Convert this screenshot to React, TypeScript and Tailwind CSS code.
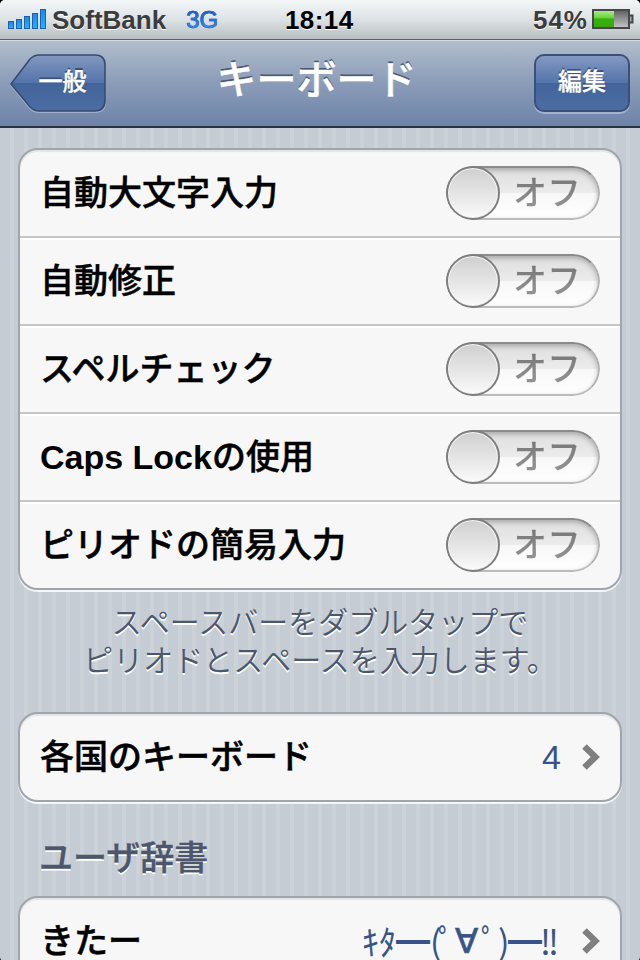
import React from "react";

const SignalBars = () => (
  <svg width="40" height="24" viewBox="0 0 40 24" className="shrink-0">
    <defs>
      <linearGradient id="signal" x1="0" y1="0" x2="0" y2="1">
        <stop offset="0" stopColor="#1f86e6" />
        <stop offset="1" stopColor="#1fb4fb" />
      </linearGradient>
    </defs>
    {[8, 10, 13, 16, 20].map((h, i) => (
      <rect key={h} x={0.5 + i * 8} y={21.5 - h} width="5" height={h - 1} fill="url(#signal)" stroke="#1c5fb4" />
    ))}
  </svg>
);

const Battery = () => (
  <svg width="42" height="22" viewBox="0 0 42 22" className="shrink-0">
    <defs>
      <linearGradient id="charge" x1="0" y1="0" x2="0" y2="1">
        <stop offset="0" stopColor="#a9ea8c" />
        <stop offset="0.4" stopColor="#6fd53e" />
        <stop offset="0.5" stopColor="#35b30b" />
        <stop offset="1" stopColor="#3aa80f" />
      </linearGradient>
      <linearGradient id="cell" x1="0" y1="0" x2="0" y2="1">
        <stop offset="0" stopColor="#5c5d5f" />
        <stop offset="1" stopColor="#c6c8ca" />
      </linearGradient>
    </defs>
    <rect x="1" y="1" width="36" height="18" fill="url(#cell)" stroke="#46474a" strokeWidth="2" />
    <rect x="2" y="2" width="20" height="16" fill="url(#charge)" />
    <path d="M38 6.5h2.5v7H38" fill="#a8abad" stroke="#46474a" strokeWidth="2" />
  </svg>
);

const StatusBar = () => (
  <div className="grid h-10 w-full shrink-0 grid-cols-[285px_1fr_auto] items-center border-b border-[#5b6064] bg-linear-to-b from-[#f3f7f8] via-[#dde2e4] to-[#b9bfc1] pl-2 pr-1.5 text-[26px] leading-none font-bold">
    <div className="flex items-center">
      <SignalBars />
      <span className="ml-1 text-[#3b3c3d] [text-shadow:0_1px_0_#ffffff]">SoftBank</span>
      <span className="ml-5 bg-linear-to-b from-[#1b3fae] to-[#3f9cf0] bg-clip-text pt-px text-[24px] font-normal text-transparent [-webkit-text-stroke:0.7px_#2a6fd4]">
        3G
      </span>
    </div>
    <span className="-ml-2 tracking-[0.4px] text-black [text-shadow:0_1px_0_#ffffff]">18:14</span>
    <div className="flex items-center gap-1">
      <span className="-ml-px tracking-[1px] text-[#3b3c3d] [text-shadow:0_1px_0_#ffffff]">54%</span>
      <Battery />
    </div>
  </div>
);

const BackButton = ({ label }: { label: string }) => (
  <button className="relative h-[60px] w-[97px] text-[24px] leading-none font-medium text-white [-webkit-text-stroke:0.3px]">
    <svg width="97" height="60" viewBox="0 0 97 60" className="absolute inset-0">
      <defs>
        <linearGradient id="back" x1="0" y1="0" x2="0" y2="1">
          <stop offset="0" stopColor="#8399c0" />
          <stop offset="0.5" stopColor="#5373aa" />
          <stop offset="0.5" stopColor="#446499" />
          <stop offset="1" stopColor="#4a6da4" />
        </linearGradient>
      </defs>
      <path
        d="M1 31L20 6Q24 2 29 2H85Q95 2 95 12V48Q95 58 85 58H29Q24 58 20 54Z"
        fill="none"
        stroke="#b4c1d5"
        strokeOpacity="0.7"
        strokeWidth="2"
      />
      <path d="M1 30L20 5Q24 1 29 1H85Q95 1 95 11V46Q95 57 85 57H29Q24 57 20 53Z" fill="url(#back)" stroke="#354a70" strokeWidth="1.6" />
    </svg>
    <span className="relative top-[-2px] left-[4px] [text-shadow:0_-2px_0_#3c5078]">{label}</span>
  </button>
);

const NavBar = () => (
  <header className="flex h-[88px] w-full shrink-0 items-start justify-between border-t border-b-2 border-t-[#d3dae3] border-b-[#2b3446] bg-linear-to-b from-[#b1bdcc] via-[#8b9cb8] to-[#6d83a8] px-[10px] pt-[13px]">
    <BackButton label="一般" />
    <h1 className="mt-[6px] -ml-2 text-[40px] leading-[40px] font-medium text-white [-webkit-text-stroke:0.5px] [text-shadow:0_-2px_0_#4d5a70]">
      キーボード
    </h1>
    <button className="h-[58px] w-24 rounded-[10px] border-2 border-[#3a5079] bg-[linear-gradient(#8399c0,#5373aa_50%,#446499_50%,#4a6da4)] pb-[2px] text-[24px] leading-none font-medium text-white shadow-[0_2px_0_#a3b2ca] [-webkit-text-stroke:0.3px] [text-shadow:0_-2px_0_#3c5078]">
      編集
    </button>
  </header>
);

const Toggle = () => (
  <div className="relative h-[54px] w-[154px] shrink-0 overflow-hidden rounded-full bg-[linear-gradient(#dcdcdc,#ececec_50%,#f8f8f8_50%,#ffffff)]">
    <span className="absolute top-[9px] left-[67px] bg-linear-to-b from-[#757575] to-[#979797] bg-clip-text text-[34px] leading-[36px] font-medium text-transparent">
      オフ
    </span>
    <div className="absolute inset-0 rounded-full border-2 border-t-[#8a8a8a] border-r-[#b0b0b0] border-b-[#bcbcbc] border-l-[#7d7d7d] shadow-[inset_0_2px_5px_rgba(0,0,0,0.25)]" />
    <div className="absolute top-0 left-0 h-[54px] w-[54px] rounded-full border-2 border-[#7e7e7e] bg-linear-to-b from-[#cfcfcf] to-[#fafafa] shadow-[inset_0_0_0_1px_#f6f6f6]" />
  </div>
);

const Chevron = () => (
  <svg width="18" height="28" viewBox="0 0 18 28" className="shrink-0">
    <path d="M2.5 3.5L13.3 14L2.5 24.5" fill="none" stroke="#7f7f7f" strokeWidth="6.5" />
  </svg>
);

const Card = ({ children }: { children: React.ReactNode }) => (
  <section className="mx-[18px] rounded-[20px] border-2 border-[#9fa5ad] bg-[#f7f7f7] shadow-[0_2px_0_#f4f6f8,inset_0_2px_1px_#e3e4e6]">
    {children}
  </section>
);

const Row = ({ label, children }: { label: React.ReactNode; children: React.ReactNode }) => (
  <div className="flex h-[88px] items-center justify-between border-b-2 border-[#c4c5c7] pr-5 pl-5 shadow-[0_2px_0_#ffffff] last:h-[86px] last:border-b-0 last:shadow-none">
    <span className="pb-px text-[34px] leading-[40px] font-medium text-black [-webkit-text-stroke:0.5px]">{label}</span>
    {children}
  </div>
);

const toggles = [
  { id: "caps", label: "自動大文字入力" },
  { id: "correct", label: "自動修正" },
  { id: "spell", label: "スペルチェック" },
  {
    id: "capslock",
    label: (
      <>
        <b className="font-bold [-webkit-text-stroke:0]">Caps Lock</b>の使用
      </>
    ),
  },
  { id: "period", label: "ピリオドの簡易入力" },
];

export default function App() {
  return (
    <div className="h-[960px] w-[640px] overflow-hidden bg-black font-['Liberation_Sans','Noto_Sans_CJK_JP',sans-serif]">
      <div className="flex h-[962px] w-full flex-col overflow-hidden rounded-[5px] bg-[repeating-linear-gradient(90deg,#c5ccd4_0px,#c5ccd4_10px,#cbd2d8_10px,#cbd2d8_14px)]">
        <StatusBar />
        <NavBar />
        <main className="flex shrink-0 flex-col pt-5">
          <Card>
            {toggles.map(({ id, label }) => (
              <Row key={id} label={label}>
                <Toggle />
              </Row>
            ))}
          </Card>
          <p className="mt-[14px] h-[108px] text-center text-[30px] leading-[38px] font-[350] text-[#4c566c] [text-shadow:0_2px_0_#ffffff]">
            スペースバーをダブルタップで
            <br />
            ピリオドとスペースを入力します。
          </p>
          <Card>
            <Row label="各国のキーボード">
              <div className="flex items-center gap-5">
                <span className="mr-px text-[34px] leading-[40px] text-[#385487]">4</span>
                <Chevron />
              </div>
            </Row>
          </Card>
          <h2 className="flex h-[94px] items-center pt-[18px] pl-[39px] text-[34px] leading-[40px] font-medium text-[#4c566c] [-webkit-text-stroke:0.4px] [text-shadow:0_2px_0_#ffffff]">
            ユーザ辞書
          </h2>
          <Card>
            <Row label="きたー">
              <div className="flex items-center gap-[25px]">
                <span className="flex font-['Noto_Sans_CJK_JP',sans-serif] text-[34px] leading-[40px] font-normal text-[#385487]">
                  <span className="w-[34px]">ｷﾀ</span>
                  <span className="w-[34px]">━</span>
                  <span className="w-[8px]">(</span>
                  <span className="w-[17px]">ﾟ</span>
                  <span className="w-[26px] font-['DejaVu_Sans',sans-serif] [-webkit-text-stroke:0.7px]">∀</span>
                  <span className="w-[17px]">ﾟ</span>
                  <span className="w-[10px]">)</span>
                  <span className="w-[32px]">━</span>
                  <span className="w-[17px] tracking-[-3px]">!!</span>
                </span>
                <Chevron />
              </div>
            </Row>
          </Card>
        </main>
      </div>
    </div>
  );
}
